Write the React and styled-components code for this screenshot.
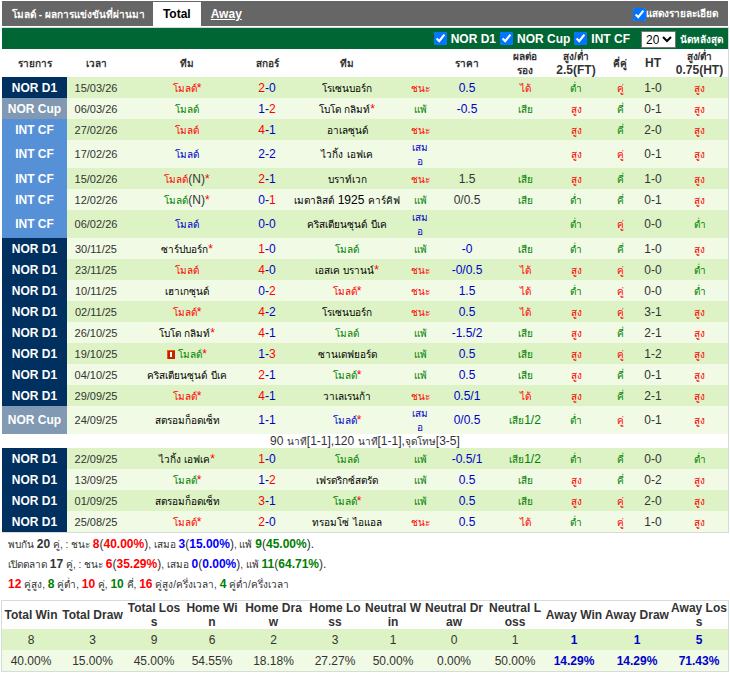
import React, { useState, Fragment } from "react";
import styled, { createGlobalStyle } from "styled-components";

const GlobalStyle = createGlobalStyle`
  body {
    margin: 0;
    background: #fff;
    color: #333;
    font-family: "Liberation Sans", Arial, sans-serif;
    font-size: 12px;
  }
`;

const colors = {
  r: "#ff0000",
  g: "#008000",
  b: "#0000cc",
  k: "#000000",
};

const leagueColors = {
  "NOR D1": "#003060",
  "NOR Cup": "#8199b2",
  "INT CF": "#5691d8",
};

const Page = styled.div`
  padding: 1px 1px 0 2px;
`;

const TitleBar = styled.div`
  display: flex;
  align-items: stretch;
  height: 25px;
  margin: 0 1px 1px 0;
  background: #666;
  color: #fff;
  font-weight: bold;
`;

const Title = styled.div`
  padding: 0 8px 0 10px;
  line-height: 26px;
`;

const Tab = styled.a`
  margin-top: 1px;
  padding: 0 10px;
  line-height: 24px;
  color: ${props => props.$active ? "#000" : "#fff"};
  background: ${props => props.$active ? "#fff" : "transparent"};
  text-decoration: ${props => props.$active ? "none" : "underline"};
`;

const CheckLabel = styled.label`
  display: flex;
  align-items: center;
  gap: ${props => props.$gap || 0}px;
  font-weight: bold;

  input {
    width: 13px;
    height: 13px;
    margin: 0;
  }
`;

const Right = styled.div`
  display: flex;
  margin-left: auto;
  padding: 1px 10px 0 0;
`;

const Panel = styled.div`
  border: solid #d6dcdc;
  border-width: 1px 1px 1px 0;
`;

const FilterBar = styled.div`
  display: flex;
  align-items: center;
  justify-content: flex-end;
  gap: 4px;
  height: 21px;
  padding-right: 5px;
  background: #006633;
  color: #fff;
  font-weight: bold;
`;

const Select = styled.select`
  width: 35px;
  height: 17px;
  margin: 2px 0 0 7px;
  padding: 0;
  border: 1px solid #767676;
  background: #fff;
  color: #000;
  font-family: inherit;
  font-size: 12px;
`;

const Table = styled.table`
  width: 100%;
  table-layout: fixed;
  border-collapse: collapse;
  text-align: center;

  th, td {
    padding: 0;
    line-height: 14px;
  }
  th {
    height: 28px;
  }
`;

const Row = styled.tr`
  height: 21px;
  background: ${props => props.$odd ? "#ddf3c5" : "#f0fae4"};
`;

const League = styled.td`
  background: ${props => leagueColors[props.$name]};
  color: #fff;
  font-weight: bold;
`;

const DateCell = styled.td`
  font-size: 11px;
`;

const Cell = styled.td`
  color: ${props => colors[props.$c] || "inherit"};
`;

const ResultCell = styled(Cell)`
  && {
    padding: 0 1px;
  }
  word-break: break-all;
`;

const Color = styled.span`
  color: ${props => colors[props.$c]};
`;

const Thai = styled.span`
  font-size: 10px;
  line-height: 10px;
`;

const Star = styled.span`
  color: #ff0000;
`;

const NoteRow = styled.tr`
  height: 14px;
  background: #fff;
`;

const RedCard = styled.svg`
  width: 8px;
  height: 9px;
  margin-right: 3px;
  vertical-align: -1px;
`;

const Summary = styled.div`
  padding: 1px 6px 6px;
  line-height: 20px;
`;

const Big = styled.b`
  color: ${props => props.$c || "inherit"};
`;

const StatsPanel = styled.div`
  border: 1px solid #d6dcdc;
  margin-left: -1px;
`;

const StatHead = styled.th`
  && {
    padding: 0 1px;
  }
  word-break: break-all;
`;

const StatCell = styled.td`
  color: ${props => props.$away ? colors.b : "inherit"};
  font-weight: ${props => props.$away ? "bold" : "normal"};
`;

const widths = [65, 58, 124, 36, 124, 22, 72, 44, 58, 30, 36, 57];

const M = "โมลด์";

// league, date, home, away, score, our side (h/a), result (w/d/l), price, cover, ft, odd/even, ht, ht over/under
// a trailing * marks the team giving the handicap
const matches = [
  ["NOR D1", "15/03/26", M + "*", "โรเซนบอร์ก", "2-0", "h", "w", "0.5", "ได้", 0, 1, "1-0", 1],
  ["NOR Cup", "06/03/26", M, "โบโด กลิมท์*", "1-2", "h", "l", "-0.5", "เสีย", 1, 0, "0-1", 1],
  ["INT CF", "27/02/26", M, "อาเลซุนด์", "4-1", "h", "w", "", "", 1, 0, "2-0", 1],
  ["INT CF", "17/02/26", M, "ไวกิ้ง เอฟเค", "2-2", "h", "d", "", "", 1, 1, "0-1", 1],
  ["INT CF", "15/02/26", M + "(N)*", "บราท์เวก", "2-1", "h", "w", "1.5", "เสีย", 1, 0, "1-0", 1],
  ["INT CF", "12/02/26", M + "(N)*", "เมตาลิสต์ 1925 คาร์คิฟ", "0-1", "h", "l", "0/0.5", "เสีย", 0, 0, "0-1", 1],
  ["INT CF", "06/02/26", M, "คริสเตียนซุนด์ บีเค", "0-0", "h", "d", "", "", 0, 1, "0-0", 0],
  ["NOR D1", "30/11/25", "ซาร์ปบอร์ก*", M, "1-0", "a", "l", "-0", "เสีย", 0, 0, "1-0", 1],
  ["NOR D1", "23/11/25", M, "เอสเค บรานน์*", "4-0", "h", "w", "-0/0.5", "ได้", 1, 1, "0-0", 0],
  ["NOR D1", "10/11/25", "เฮาเกซุนด์", M + "*", "0-2", "a", "w", "1.5", "ได้", 0, 1, "0-0", 0],
  ["NOR D1", "02/11/25", M + "*", "โรเซนบอร์ก", "4-2", "h", "w", "0.5", "ได้", 1, 1, "3-1", 1],
  ["NOR D1", "26/10/25", "โบโด กลิมท์*", M, "4-1", "a", "l", "-1.5/2", "เสีย", 1, 0, "2-1", 1],
  ["NOR D1", "19/10/25", M + "*", "ซานเดฟยอร์ด", "1-3", "h", "l", "0.5", "เสีย", 1, 1, "1-2", 1, "card"],
  ["NOR D1", "04/10/25", "คริสเตียนซุนด์ บีเค", M + "*", "2-1", "a", "l", "0.5", "เสีย", 1, 0, "0-1", 1],
  ["NOR D1", "29/09/25", M + "*", "วาเลเรนก้า", "4-1", "h", "w", "0.5/1", "ได้", 1, 0, "2-1", 1],
  ["NOR Cup", "24/09/25", "สตรอมก็อดเซ็ท", M + "*", "1-1", "a", "d", "0/0.5", "เสีย1/2", 0, 1, "0-1", 1, "note"],
  ["NOR D1", "22/09/25", "ไวกิ้ง เอฟเค*", M, "1-0", "a", "l", "-0.5/1", "เสีย1/2", 0, 0, "0-0", 0],
  ["NOR D1", "13/09/25", M + "*", "เฟรดริกซ์สตรัด", "1-2", "h", "l", "0.5", "เสีย", 1, 0, "0-2", 1],
  ["NOR D1", "01/09/25", "สตรอมก็อดเซ็ท", M + "*", "3-1", "a", "l", "0.5", "เสีย", 1, 1, "2-0", 1],
  ["NOR D1", "25/08/25", M + "*", "ทรอมโซ่ ไอแอล", "2-0", "h", "w", "0.5", "ได้", 0, 1, "1-0", 1],
];

const results = {
  w: ["ชนะ", "r"],
  d: ["เสมอ", "b"],
  l: ["แพ้", "g"],
};

const stats = [
  ["Total Win", 8, "40.00%"],
  ["Total Draw", 3, "15.00%"],
  ["Total Loss", 9, "45.00%"],
  ["Home Win", 6, "54.55%"],
  ["Home Draw", 2, "18.18%"],
  ["Home Loss", 3, "27.27%"],
  ["Neutral Win", 1, "50.00%"],
  ["Neutral Draw", 0, "0.00%"],
  ["Neutral Loss", 1, "50.00%"],
  ["Away Win", 1, "14.29%"],
  ["Away Draw", 1, "14.29%"],
  ["Away Loss", 5, "71.43%"],
];
const statWidths = [58, 65, 58, 58, 65, 58, 58, 64, 58, 60, 66, 58];

// Thai runs are set smaller than the latin text and digits around them
function Text({ children }) {
  return children.split(/([\u0E00-\u0E7F]+)/).map((part, i) => (
    i % 2 ? <Thai key={i}>{part}</Thai> : part
  ));
}

function Team({ name, c, card }) {
  const star = name.endsWith("*");
  const neutral = name.includes("(N)");
  return (
    <td>
      {card && (
        <RedCard viewBox="0 0 8 9">
          <rect width="8" height="9" fill="#e06000" />
          <rect x="1" y="1" width="7" height="8" fill="#c82000" />
          <rect x="3" y="2" width="2" height="5" fill="#fff" />
        </RedCard>
      )}
      <Color $c={c}><Text>{name.replace("*", "").replace("(N)", "")}</Text></Color>
      {neutral && "(N)"}
      {star && <Star>*</Star>}
    </td>
  );
}

function Score({ value }) {
  const [h, a] = value.split("-");
  return (
    <Cell $c="b">
      <Color $c={h > a ? "r" : "b"}>{h}</Color>-<Color $c={a > h ? "r" : "b"}>{a}</Color>
    </Cell>
  );
}

function Match({ data, odd }) {
  const [league, date, home, away, score, side, res, price, cover, ft, pair, ht, htOver, extra] = data;
  const [resText, resColor] = results[res];
  return (
    <Fragment>
      <Row $odd={odd}>
        <League $name={league}>{league}</League>
        <DateCell>{date}</DateCell>
        <Team name={home} c={side === "h" ? resColor : "k"} card={extra === "card"} />
        <Score value={score} />
        <Team name={away} c={side === "a" ? resColor : "k"} />
        <ResultCell $c={resColor}><Text>{resText}</Text></ResultCell>
        <Cell $c={league === "INT CF" ? "" : "b"}>{price}</Cell>
        <Cell $c={cover === "ได้" ? "r" : "g"}><Text>{cover}</Text></Cell>
        <Cell $c={ft ? "r" : "g"}><Text>{ft ? "สูง" : "ต่ำ"}</Text></Cell>
        <Cell $c={pair ? "r" : "g"}><Text>{pair ? "คู่" : "คี่"}</Text></Cell>
        <td>{ht}</td>
        <Cell $c={htOver ? "r" : "g"}><Text>{htOver ? "สูง" : "ต่ำ"}</Text></Cell>
      </Row>
      {extra === "note" && (
        <NoteRow>
          <td colSpan="12"><Text>90 นาที[1-1],120 นาที[1-1],จุดโทษ[3-5]</Text></td>
        </NoteRow>
      )}
    </Fragment>
  );
}

function App() {
  const [detail, setDetail] = useState(true);
  const [count, setCount] = useState("20");
  const [shown, setShown] = useState({ "NOR D1": true, "NOR Cup": true, "INT CF": true });

  const list = matches.filter(m => shown[m[0]]).slice(0, Number(count));

  return (
    <Page>
      <GlobalStyle />
      <TitleBar>
        <Title><Thai>โมลด์ - ผลการแข่งขันที่ผ่านมา</Thai></Title>
        <Tab href="#total" $active>Total</Tab>
        <Tab href="#away">Away</Tab>
        <Right>
          <CheckLabel>
            <input type="checkbox" checked={detail} onChange={e => setDetail(e.target.checked)} />
            <Thai>แสดงรายละเอียด</Thai>
          </CheckLabel>
        </Right>
      </TitleBar>

      <Panel>
        <FilterBar>
          {Object.keys(shown).map(name => (
            <CheckLabel key={name} $gap={4}>
              <input
                type="checkbox"
                checked={shown[name]}
                onChange={e => setShown({ ...shown, [name]: e.target.checked })}
              />
              {name}
            </CheckLabel>
          ))}
          <Select id="count" value={count} onChange={e => setCount(e.target.value)}>
            <option>10</option>
            <option>20</option>
          </Select>
          <label htmlFor="count"><Thai>นัดหลังสุด</Thai></label>
        </FilterBar>
        <Table>
          <colgroup>
            {widths.map((w, i) => <col key={i} width={w} />)}
          </colgroup>
          <thead>
            <tr>
              <th><Thai>รายการ</Thai></th>
              <th><Thai>เวลา</Thai></th>
              <th><Thai>ทีม</Thai></th>
              <th><Thai>สกอร์</Thai></th>
              <th><Thai>ทีม</Thai></th>
              <th></th>
              <th><Thai>ราคา</Thai></th>
              <th><Thai>ผลต่อ<br />รอง</Thai></th>
              <th><Thai>สูง/ต่ำ</Thai><br />2.5(FT)</th>
              <th><Thai>คี่คู่</Thai></th>
              <th>HT</th>
              <th><Thai>สูง/ต่ำ</Thai><br />0.75(HT)</th>
            </tr>
          </thead>
          <tbody>
            {list.map((m, i) => <Match key={m[1]} data={m} odd={i % 2 === 0} />)}
          </tbody>
        </Table>
      </Panel>

      <Summary>
        <div>
          <Thai>พบกัน </Thai><Big>20</Big><Thai> คู่, : ชนะ </Thai><Big $c="red">8</Big>(<Big $c="red">40.00%</Big>)<Thai>, เสมอ </Thai><Big $c="blue">3</Big>(<Big $c="blue">15.00%</Big>)<Thai>, แพ้ </Thai><Big $c="green">9</Big>(<Big $c="green">45.00%</Big>).
        </div>
        <div>
          <Thai>เปิดตลาด </Thai><Big>17</Big><Thai> คู่, : ชนะ </Thai><Big $c="red">6</Big>(<Big $c="red">35.29%</Big>)<Thai>, เสมอ </Thai><Big $c="blue">0</Big>(<Big $c="blue">0.00%</Big>)<Thai>, แพ้ </Thai><Big $c="green">11</Big>(<Big $c="green">64.71%</Big>).
        </div>
        <div>
          <Big $c="red">12</Big><Thai> คู่สูง, </Thai><Big $c="green">8</Big><Thai> คู่ต่ำ, </Thai><Big $c="red">10</Big><Thai> คู่, </Thai><Big $c="green">10</Big><Thai> คี่, </Thai><Big $c="red">16</Big><Thai> คู่สูง/ครึ่งเวลา, </Thai><Big $c="green">4</Big><Thai> คู่ต่ำ/ครึ่งเวลา</Thai>
        </div>
      </Summary>

      <StatsPanel>
        <Table>
          <colgroup>
            {stats.map((s, i) => <col key={s[0]} width={statWidths[i]} />)}
          </colgroup>
          <thead>
            <tr>
              {stats.map(s => <StatHead key={s[0]}>{s[0]}</StatHead>)}
            </tr>
          </thead>
          <tbody>
            {[1, 2].map(n => (
              <Row key={n} $odd={n === 1}>
                {stats.map((s, i) => <StatCell key={s[0]} $away={i > 8}>{s[n]}</StatCell>)}
              </Row>
            ))}
          </tbody>
        </Table>
      </StatsPanel>
    </Page>
  );
}

export default App;
